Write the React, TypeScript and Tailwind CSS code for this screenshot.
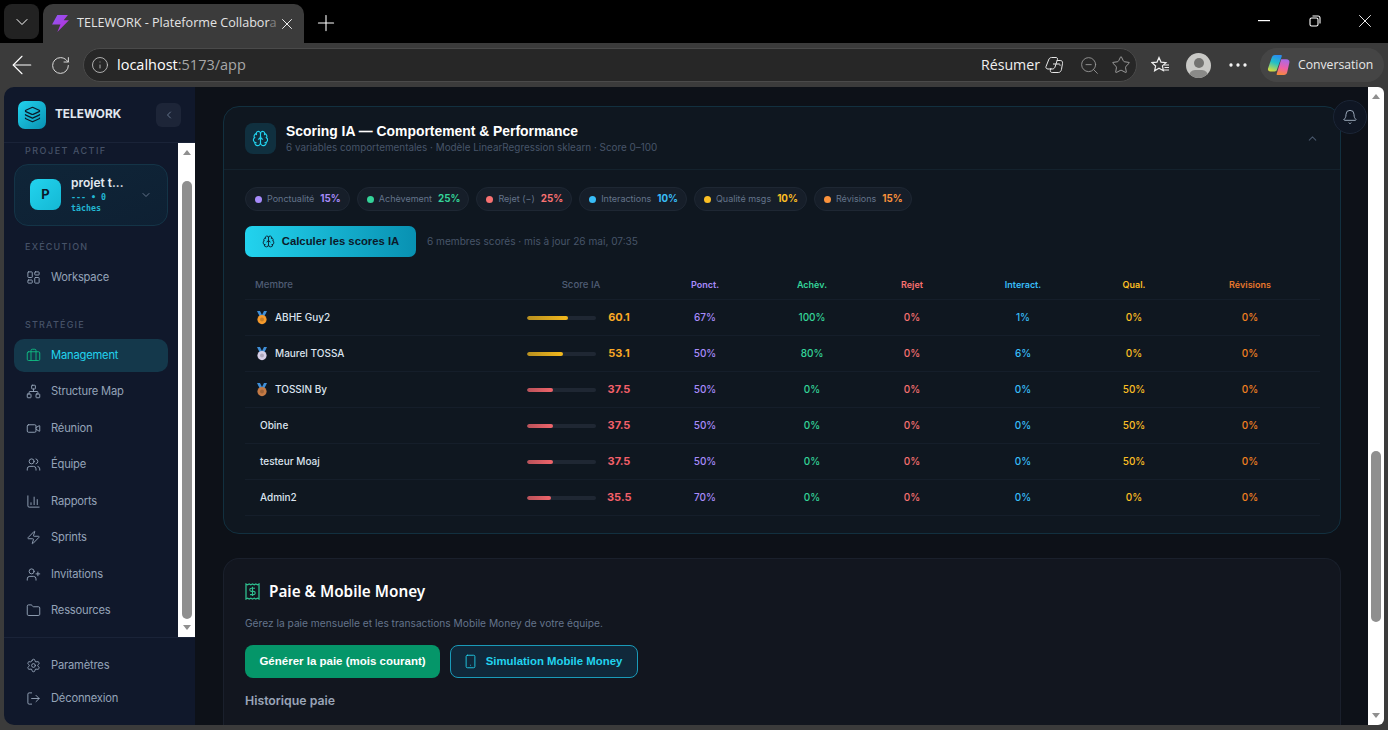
import type { FC, ReactNode } from "react";
import {
  ArrowLeft,
  BarChart3,
  Bell,
  Brain,
  Briefcase,
  ChevronDown,
  ChevronLeft,
  ChevronUp,
  Folder,
  Info,
  Layers,
  LayoutDashboard,
  LogOut,
  MoreHorizontal,
  Network,
  Plus,
  RotateCw,
  Settings,
  Smartphone,
  Star,
  UserPlus,
  Users,
  Video,
  X,
  Zap,
  ZoomOut,
} from "lucide-react";

type Member = {
  name: string;
  medal?: string;
  score: string;
  fill: number;
  scoreColor: string;
  barClass: string;
  ponct: string;
  achev: string;
  rejet: string;
  interact: string;
  qual: string;
  rev: string;
};

const gold = "bg-gradient-to-r from-[#b8901f] to-[#f4b91c]";
const red = "bg-gradient-to-r from-[#b9525a] to-[#f0646a]";

const members: Member[] = [
  { name: "ABHE Guy2", medal: "#f59a2c", score: "60.1", fill: 60, scoreColor: "text-[#f9a825]", barClass: gold, ponct: "67%", achev: "100%", rejet: "0%", interact: "1%", qual: "0%", rev: "0%" },
  { name: "Maurel TOSSA", medal: "#d6cfe6", score: "53.1", fill: 52, scoreColor: "text-[#f9a825]", barClass: gold, ponct: "50%", achev: "80%", rejet: "0%", interact: "6%", qual: "0%", rev: "0%" },
  { name: "TOSSIN By", medal: "#c47a45", score: "37.5", fill: 38, scoreColor: "text-[#f4606a]", barClass: red, ponct: "50%", achev: "0%", rejet: "0%", interact: "0%", qual: "50%", rev: "0%" },
  { name: "Obine", score: "37.5", fill: 38, scoreColor: "text-[#f4606a]", barClass: red, ponct: "50%", achev: "0%", rejet: "0%", interact: "0%", qual: "50%", rev: "0%" },
  { name: "testeur Moaj", score: "37.5", fill: 38, scoreColor: "text-[#f4606a]", barClass: red, ponct: "50%", achev: "0%", rejet: "0%", interact: "0%", qual: "50%", rev: "0%" },
  { name: "Admin2", score: "35.5", fill: 35, scoreColor: "text-[#f4606a]", barClass: red, ponct: "70%", achev: "0%", rejet: "0%", interact: "0%", qual: "0%", rev: "0%" },
];

const chips = [
  { label: "Ponctualité", pct: "15%", dot: "bg-[#a78bfa]", text: "text-[#a78bfa]" },
  { label: "Achèvement", pct: "25%", dot: "bg-[#34d399]", text: "text-[#34d399]" },
  { label: "Rejet (−)", pct: "25%", dot: "bg-[#f87171]", text: "text-[#f87171]" },
  { label: "Interactions", pct: "10%", dot: "bg-[#38bdf8]", text: "text-[#38bdf8]" },
  { label: "Qualité msgs", pct: "10%", dot: "bg-[#fbbf24]", text: "text-[#fbbf24]" },
  { label: "Révisions", pct: "15%", dot: "bg-[#fb923c]", text: "text-[#fb923c]" },
];

const rowGrid =
  "grid grid-cols-[265px_142px_106px_108px_92px_130px_92px_140px] items-center text-center";

const Medal: FC<{ color: string }> = ({ color }) => (
  <svg width="12" height="14" viewBox="0 0 12 14" className="shrink-0">
    <path d="M1 0h3l2 4 2-4h3L8 6H4z" fill="#3f8fd8" />
    <circle cx="6" cy="8.6" r="4.6" fill={color} />
    <circle cx="6" cy="8.6" r="2" fill="#000" opacity="0.18" />
  </svg>
);

const NavItem: FC<{ icon: ReactNode; label: string; active?: boolean }> = ({ icon, label, active }) => (
  <div
    className={`flex h-[33px] items-center gap-[10px] rounded-[10px] pl-[12px] text-[11.2px] tracking-[-0.2px] ${
      active ? "bg-[#14384b] text-[#22d3ee]" : "text-[#94a3b8]"
    }`}
  >
    {icon}
    <span>{label}</span>
  </div>
);

const BrowserChrome: FC = () => (
  <header className="shrink-0 font-['Open_Sans',sans-serif]">
    <div className="flex h-[43px] items-end bg-black pl-[4px]">
      <div className="mb-[4px] flex h-[35px] w-[35px] items-center justify-center rounded-[8px] bg-[#222222] text-white">
        <ChevronDown size={20} strokeWidth={1.2} />
      </div>
      <div className="ml-[4px] flex h-[39px] w-[261px] items-center rounded-t-[10px] bg-[#3b3b3b] pl-[8px] text-white">
        <svg width="19" height="19" viewBox="0 0 18 18" className="shrink-0">
          <defs>
            <linearGradient id="fav" x1="0" y1="0" x2="1" y2="1">
              <stop offset="0" stopColor="#8b5cf6" />
              <stop offset="1" stopColor="#c026d3" />
            </linearGradient>
          </defs>
          <path d="M6 1h10l-4 5h5L6 17l3-7H1z" fill="url(#fav)" />
        </svg>
        <span className="ml-[7px] w-[200px] whitespace-nowrap text-[12.6px] text-[#e4e4e4]">
          TELEWORK - Plateforme Collabor<span className="opacity-40">a</span>
        </span>
        <X size={18} strokeWidth={1.2} className="ml-[1px] shrink-0" />
      </div>
      <Plus size={26} strokeWidth={1} className="mb-[7px] ml-[9px] text-white" />
      <div className="mb-[11px] ml-auto flex items-center text-white">
        <svg width="12" height="2" viewBox="0 0 12 2" className="mr-[39px]">
          <rect width="12" height="1.2" fill="#fff" />
        </svg>
        <svg width="12" height="12" viewBox="0 0 12 12" className="mr-[33px]" fill="none" stroke="#fff" strokeWidth="1.1">
          <rect x="1" y="3" width="8" height="8" rx="1.6" />
          <path d="M3.5 1h5.5a2 2 0 0 1 2 2v5.5" />
        </svg>
        <X size={22} strokeWidth={1} className="mr-[12px]" />
      </div>
    </div>
    <div className="flex h-[44px] items-center bg-[#3b3b3b] pl-[7px] text-white">
      <ArrowLeft size={30} strokeWidth={0.9} />
      <RotateCw size={21} strokeWidth={1.1} className="ml-[13px] text-[#e0e0e0]" />
      <div className="ml-[12px] flex h-[34px] w-[1054px] items-center rounded-full border border-[#4a4a4a] bg-[#272727] pl-[7px] pr-[5px]">
        <Info size={18} strokeWidth={1.1} className="text-[#c8c8c8]" />
        <span className="ml-[8px] text-[14.5px]">
          localhost<span className="text-[#a8a8a8]">:5173/app</span>
        </span>
        <span className="ml-auto text-[14.2px] text-[#f0f0f0]">Résumer</span>
        <svg width="20" height="18" viewBox="0 0 20 18" fill="none" stroke="#e8e8e8" strokeWidth="1" className="ml-[4px]">
          <path d="M7.5 1.5h4.5c1.2 0 1.8 1 1.4 2.2L11 11c-.5 1.4-1.4 2-2.6 2H4c-1.4 0-2.4-1-2-2.4L4.6 4c.5-1.6 1.5-2.5 2.9-2.5z" />
          <path d="M12.8 4.5h3.4c1.8 0 2.6 1.2 2.3 2.8l-1 6c-.3 1.8-1.4 3.2-3.2 3.2H8.2c-1.4 0-2.2-1-1.9-2.2L7 12" />
          <path d="M9 8h6c1 0 1.4.8 1 1.8" />
        </svg>
        <ZoomOut size={21} strokeWidth={1} className="ml-[15px] text-[#9c9c9c]" />
        <Star size={20} strokeWidth={1} className="ml-[11px] text-[#b0b0b0]" />
      </div>
      <svg width="19" height="18" viewBox="0 0 19 18" fill="none" stroke="#f0f0f0" strokeWidth="1.2" className="ml-[14px]">
        <path d="M8 1.5l2 4.6 5 .5-3.6 3.3 1 4.8L8 12.3l-4.4 2.5 1-4.8L1 6.6l5-.5z" />
        <path d="M13 9h5M13.5 11.5H18M13 14h5" />
      </svg>
      <div className="ml-[16px] h-[25px] w-[25px] overflow-hidden rounded-full bg-[#c9c9c6]">
        <div className="mx-auto mt-[5px] h-[10px] w-[10px] rounded-full bg-[#737371]" />
        <div className="mx-auto mt-[2px] h-[12px] w-[19px] rounded-full bg-[#8a8a88]" />
      </div>
      <MoreHorizontal size={24} strokeWidth={1.3} className="ml-[15px]" />
      <div className="ml-[10px] flex h-[34px] w-[124px] items-center rounded-full bg-[#4a4a4a]/70 pl-[7px] text-[12.2px] text-[#e8e8e8]">
        <svg width="24" height="24" viewBox="0 0 24 24" className="shrink-0">
          <defs>
            <linearGradient id="cpA" x1="0.6" y1="0" x2="0.3" y2="1">
              <stop offset="0" stopColor="#2a8df0" />
              <stop offset="0.45" stopColor="#22c0c8" />
              <stop offset="1" stopColor="#d8dc3c" />
            </linearGradient>
            <linearGradient id="cpB" x1="0.6" y1="0" x2="0.4" y2="1">
              <stop offset="0" stopColor="#a76be8" />
              <stop offset="0.55" stopColor="#ee5fa8" />
              <stop offset="1" stopColor="#f58a3c" />
            </linearGradient>
          </defs>
          <path d="M8 2h6c1 0 1 .8.6 1.8L9.8 17c-.4 1-1 1.4-2 1.4H3.4C1.4 18.4.6 17 1 15.4L4.6 5C5.2 3 6.2 2 8 2z" fill="url(#cpA)" />
          <path d="M14.2 6.2h5c2.4 0 3.6 1.4 3.2 3.4l-2.2 9.6C19.8 21 18.6 22 17 22h-6.4c-1 0-1.2-.8-.8-1.6z" fill="url(#cpB)" />
        </svg>
        <span className="ml-[7px]">Conversation</span>
      </div>
    </div>
  </header>
);

const Sidebar: FC = () => (
  <aside className="flex w-[191px] shrink-0 flex-col rounded-bl-[10px] rounded-tl-[10px] bg-[#10182b]">
    <div className="flex h-[56px] shrink-0 items-center border-b border-[#1a2338] pl-[14px] pr-[14px]">
      <div className="flex h-[28px] w-[28px] items-center justify-center rounded-[7px] bg-gradient-to-br from-[#22d3ee] to-[#0891b2]">
        <Layers size={17} strokeWidth={1.7} className="text-[#0b1a2a]" />
      </div>
      <span className="ml-[9px] text-[11.8px] font-bold text-[#e2e8f0]">TELEWORK</span>
      <div className="ml-auto flex h-[24px] w-[25px] items-center justify-center rounded-[6px] bg-[#1d2538]">
        <ChevronLeft size={12} className="text-[#64748b]" />
      </div>
    </div>
    <div className="flex min-h-0 flex-1">
      <div className="min-w-0 flex-1 overflow-hidden pl-[10px] pr-[10px]">
        <p className="pl-[11px] pt-[1px] text-[9px] font-medium tracking-[1.5px] text-[#465268]">PROJET ACTIF</p>
        <div className="mt-[6px] flex h-[62px] items-center rounded-[14px] border border-[#143447] bg-gradient-to-br from-[#0f2538] to-[#0e2033] pl-[15px]">
          <div className="flex h-[31px] w-[31px] shrink-0 items-center justify-center rounded-[8px] bg-gradient-to-br from-[#22d3ee] to-[#14b8d4] text-[13px] font-bold text-[#0b1a2a]">
            P
          </div>
          <div className="ml-[10px] w-[62px]">
            <p className="text-[12px] font-semibold leading-[15px] text-[#e2e8f0]">projet t...</p>
            <p className="mt-[2px] font-['DejaVu_Sans_Mono',monospace] text-[8.3px] font-bold leading-[11px] text-[#22b8d4]">
              --- • 0 tâches
            </p>
          </div>
          <ChevronDown size={12} className="ml-[7px] text-[#64748b]" />
        </div>
        <p className="mt-[14px] pl-[11px] text-[9px] font-medium tracking-[1.2px] text-[#465268]">EXÉCUTION</p>
        <div className="mt-[8px]">
          <NavItem icon={<LayoutDashboard size={15} strokeWidth={1.5} />} label="Workspace" />
        </div>
        <p className="mt-[24px] pl-[11px] text-[9px] font-medium tracking-[1.2px] text-[#465268]">STRATÉGIE</p>
        <div className="mt-[7px] flex flex-col gap-[3.5px]">
          <NavItem active icon={<Briefcase size={15} strokeWidth={1.5} className="text-[#10b981]" />} label="Management" />
          <NavItem icon={<Network size={15} strokeWidth={1.5} />} label="Structure Map" />
          <NavItem icon={<Video size={15} strokeWidth={1.5} />} label="Réunion" />
          <NavItem icon={<Users size={15} strokeWidth={1.5} />} label="Équipe" />
          <NavItem icon={<BarChart3 size={15} strokeWidth={1.5} />} label="Rapports" />
          <NavItem icon={<Zap size={15} strokeWidth={1.5} />} label="Sprints" />
          <NavItem icon={<UserPlus size={15} strokeWidth={1.5} />} label="Invitations" />
          <NavItem icon={<Folder size={15} strokeWidth={1.5} />} label="Ressources" />
        </div>
      </div>
      <div className="flex w-[17px] shrink-0 flex-col items-center bg-white pb-[7px] pt-[7px]">
        <div className="h-0 w-0 border-x-[4px] border-b-[5px] border-x-transparent border-b-[#8f8f8f]" />
        <div className="mt-[26px] w-[10px] flex-1 rounded-full bg-[#8f8f8f]" />
        <div className="mt-[6px] h-0 w-0 border-x-[4px] border-t-[5px] border-x-transparent border-t-[#8f8f8f]" />
      </div>
    </div>
    <div className="h-[88px] shrink-0 border-t border-[#1a2338] px-[10px] pt-[11px]">
      <NavItem icon={<Settings size={15} strokeWidth={1.5} />} label="Paramètres" />
      <NavItem icon={<LogOut size={15} strokeWidth={1.5} />} label="Déconnexion" />
    </div>
  </aside>
);

const ScoreTable: FC = () => (
  <div className="mt-[12px]">
    <div className={`${rowGrid} h-[31px] border-b border-[#151e2a] pt-[2px] text-[9px] font-semibold`}>
      <span className="pl-[10px] text-left text-[9.6px] font-medium text-[#4f5d75]">Membre</span>
      <span className="text-[9.6px] font-medium text-[#4f5d75]">Score IA</span>
      <span className="text-[#a78bfa]">Ponct.</span>
      <span className="text-[#34d399]">Achèv.</span>
      <span className="text-[#f87171]">Rejet</span>
      <span className="text-[#38bdf8]">Interact.</span>
      <span className="text-[#fbbf24]">Qual.</span>
      <span className="text-[#e8782c]">Révisions</span>
    </div>
    {members.map((m) => (
      <div key={m.name} className={`${rowGrid} h-[36px] border-b border-[#151e2a] text-[10px] font-medium`}>
        <div className="flex items-center gap-[7px] pl-[11px] text-left text-[#dbe3ee]">
          {m.medal ? <Medal color={m.medal} /> : null}
          <span className={m.medal ? "" : "pl-[4px]"}>{m.name}</span>
        </div>
        <div className="flex items-center gap-[11px] pl-[17px]">
          <div className="h-[4px] w-[69px] shrink-0 overflow-hidden rounded-full bg-[#1f2733]">
            <div className={`h-full rounded-full ${m.barClass}`} style={{ width: `${m.fill}%` }} />
          </div>
          <span className={`w-[24px] text-center text-[11px] font-bold ${m.scoreColor}`}>{m.score}</span>
        </div>
        <span className="text-[#a78bfa]">{m.ponct}</span>
        <span className="text-[#34d399]">{m.achev}</span>
        <span className="text-[#f87171]">{m.rejet}</span>
        <span className="text-[#38bdf8]">{m.interact}</span>
        <span className="text-[#fbbf24]">{m.qual}</span>
        <span className="text-[#f28020]">{m.rev}</span>
      </div>
    ))}
  </div>
);

const ScoringCard: FC = () => (
  <section className="h-[428px] shrink-0 rounded-[16px] border border-[#12303f] bg-[#0f1720]">
    <div className="flex h-[63px] items-center border-b border-[#14222d] pl-[21px] pr-[21px]">
      <div className="flex h-[31px] w-[31px] items-center justify-center rounded-[8px] bg-[#10303f]">
        <Brain size={17} strokeWidth={1.6} className="text-[#22d3ee]" />
      </div>
      <div className="ml-[10px]">
        <p className="font-['Liberation_Sans',sans-serif] text-[13.9px] font-bold leading-[17px] text-white">
          Scoring IA — Comportement &amp; Performance
        </p>
        <p className="text-[9.9px] leading-[14px] text-[#475569]">
          6 variables comportementales · Modèle LinearRegression sklearn · Score 0–100
        </p>
      </div>
      <ChevronUp size={13} className="ml-auto text-[#475569]" />
    </div>
    <div className="pl-[21px] pr-[20px] pt-[17px]">
      <div className="flex gap-[7px]">
        {chips.map((c) => (
          <div
            key={c.label}
            className="flex h-[24px] items-center gap-[5px] rounded-full border border-[#1e2733] bg-[#161e29] pl-[9px] pr-[8px] text-[9px]"
          >
            <span className={`h-[7px] w-[7px] rounded-full ${c.dot}`} />
            <span className="text-[#64748b]">{c.label}</span>
            <span className={`ml-[1px] text-[9.8px] font-bold ${c.text}`}>{c.pct}</span>
          </div>
        ))}
      </div>
      <div className="mt-[15px] flex items-center">
        <button className="flex h-[31px] w-[171px] items-center justify-center gap-[7px] rounded-[7px] bg-gradient-to-r from-[#22d3ee] to-[#0891b2] font-['Liberation_Sans',sans-serif] text-[11.3px] font-bold text-[#0b1a2a]">
          <Brain size={13} strokeWidth={1.6} />
          Calculer les scores IA
        </button>
        <span className="ml-[11px] text-[10.1px] text-[#475569]">6 membres scorés · mis à jour 26 mai, 07:35</span>
      </div>
      <ScoreTable />
    </div>
  </section>
);

const PayrollCard: FC = () => (
  <section className="mt-[24px] min-h-0 flex-1 rounded-t-[16px] border border-b-0 border-[#1a202c] bg-[#12161f] pl-[21px] pt-[20px]">
    <div className="flex h-[24px] items-center gap-[9px]">
      <svg width="15" height="17" viewBox="0 0 15 17" fill="none" stroke="#2fbf8f" strokeWidth="1.3">
        <path d="M1 1l1.6.8L4.2 1l1.6.8L7.5 1l1.7.8L10.8 1l1.6.8L14 1v15l-1.6-.8-1.6.8-1.6-.8-1.7.8-1.7-.8-1.6.8-1.6-.8L1 16z" />
        <path d="M10 5.2H6.4a1.5 1.5 0 0 0 0 3.2h2.2a1.5 1.5 0 0 1 0 3.2H5M7.5 3.8v9.2" strokeWidth="1.1" />
      </svg>
      <h2 className="font-['Noto_Sans',sans-serif] text-[15.3px] font-semibold text-white">Paie &amp; Mobile Money</h2>
    </div>
    <p className="mt-[13px] text-[10.2px] leading-[14px] text-[#64748b]">
      Gérez la paie mensuelle et les transactions Mobile Money de votre équipe.
    </p>
    <div className="mt-[15px] flex gap-[10px]">
      <button className="h-[33px] w-[195px] rounded-[8px] bg-[#059669] font-['Liberation_Sans',sans-serif] text-[11.5px] font-bold text-white">
        Générer la paie (mois courant)
      </button>
      <button className="flex h-[33px] w-[188px] items-center justify-center gap-[8px] rounded-[8px] border border-[#1a9ab8] bg-[#10283a] pr-[3px] font-['Liberation_Sans',sans-serif] text-[11.4px] font-bold text-[#22d3ee]">
        <Smartphone size={15} strokeWidth={1.4} />
        Simulation Mobile Money
      </button>
    </div>
    <h3 className="mt-[14px] text-[12.3px] font-semibold text-[#9aa5b8]">Historique paie</h3>
  </section>
);

export default function App() {
  return (
    <div className="flex h-[730px] w-[1388px] flex-col overflow-hidden bg-[#3b3b3b] font-['Inter',sans-serif]">
      <BrowserChrome />
      <div className="flex h-[638px] pl-[4px] pr-[4px]">
        <Sidebar />
        <main className="relative flex min-w-0 flex-1 flex-col overflow-hidden bg-[#0d1118] pl-[28px] pr-[27px] pt-[19px]">
          <ScoringCard />
          <PayrollCard />
          <div className="absolute right-[1px] top-[13px] flex h-[34px] w-[34px] items-center justify-center rounded-full border border-[#1b2536] bg-[#0f1623]">
            <Bell size={16} strokeWidth={1.4} className="text-[#a3b0c2]" />
          </div>
        </main>
        <div className="flex w-[16px] shrink-0 flex-col items-center rounded-tr-[6px] rounded-br-[6px] bg-white pb-[7px] pt-[7px]">
          <div className="h-0 w-0 border-x-[4px] border-b-[5px] border-x-transparent border-b-[#8f8f8f]" />
          <div className="mt-[352px] h-[171px] w-[10px] rounded-full bg-[#8f8f8f]" />
          <div className="mt-auto h-0 w-0 border-x-[4px] border-t-[5px] border-x-transparent border-t-[#8f8f8f]" />
        </div>
      </div>
    </div>
  );
}
